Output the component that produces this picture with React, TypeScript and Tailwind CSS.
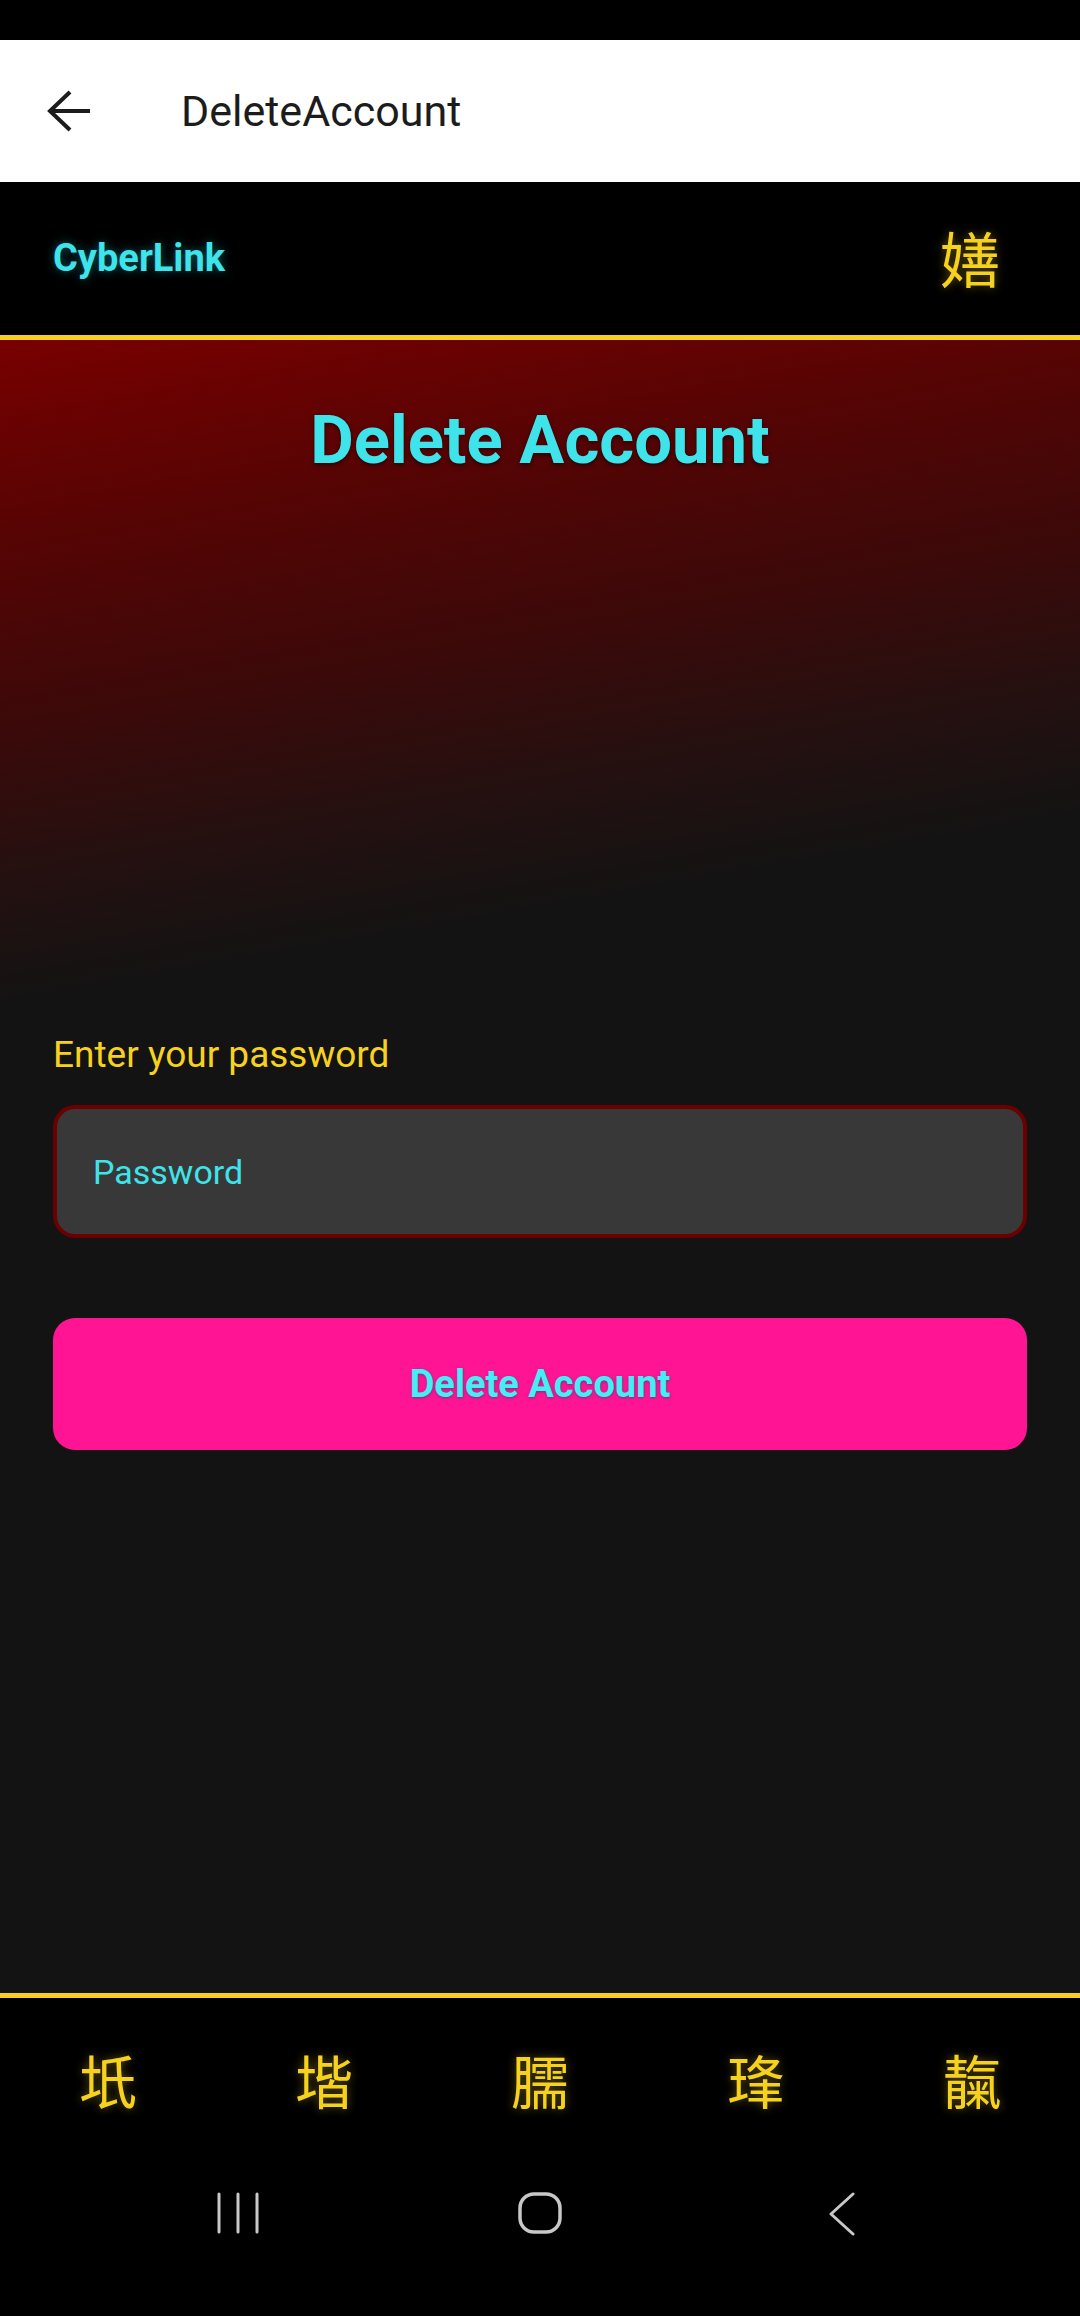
import React from 'react';

const navGlyphs = ['坁', '堦', '臑', '琒', '靝'];

export default function App() {
  return (
    <div className="w-[1080px] h-[2316px] flex flex-col bg-black overflow-hidden font-['Roboto','Noto_Sans_CJK_SC',sans-serif]">
      <div className="h-[40px] shrink-0 bg-black" />

      <header className="h-[142px] shrink-0 bg-white flex items-center relative z-10 shadow-[0_3px_8px_rgba(0,0,0,0.45)]">
        <svg className="ml-[46px]" width="46" height="44" viewBox="0 0 46 44" fill="none" stroke="#1c1c1c" strokeWidth="4">
          <path d="M44 22H4" />
          <path d="M24 3L4 22L24 41" />
        </svg>
        <h1 className="ml-[89px] text-[43px] leading-none text-[#1c1c1c]">DeleteAccount</h1>
      </header>

      <div className="h-[158px] shrink-0 flex items-center justify-between pl-[53px] pr-[80px] bg-black border-b-[5px] border-[#f6cf1f]">
        <span className="text-[38px] font-bold text-[#3fe3ea] [text-shadow:0_0_10px_rgba(0,200,210,0.45)]">CyberLink</span>
        <span className="text-[60px] leading-none mt-[8px] text-[#f6d21f] [text-shadow:0_0_10px_rgba(246,210,31,0.4)]">嫸</span>
      </div>

      <main className="flex-1 flex flex-col bg-[#131313] bg-[linear-gradient(170deg,#780000_0px,#560404_200px,#3c0909_380px,#261010_520px,#131313_660px)]">
        <section className="h-[660px] shrink-0 pt-[60px]">
          <h2 className="text-center text-[67px] leading-[80px] font-bold text-[#3fe3ea] [text-shadow:0_2px_4px_rgba(0,0,0,0.5)]">
            Delete Account
          </h2>
        </section>

        <section className="px-[53px] pt-[33px] flex flex-col">
          <label className="text-[37px] leading-[43px] text-[#f6d21f]">Enter your password</label>
          <input
            type="password"
            placeholder="Password"
            className="mt-[29px] h-[133px] rounded-[22px] border-[4px] border-[#6a0000] bg-[#383838] pl-[36px] text-[34px] text-[#3fe3ea] placeholder:text-[#3fe3ea] outline-none"
          />
          <button className="mt-[80px] h-[132px] rounded-[22px] bg-[#ff1493] text-[38px] font-bold text-[#45eef5] [text-shadow:0_1px_3px_rgba(0,80,120,0.6)]">
            Delete Account
          </button>
        </section>
      </main>

      <nav className="h-[177px] shrink-0 grid grid-cols-5 items-center bg-black border-t-[5px] border-[#f6cf1f]">
        {navGlyphs.map(c => (
          <span key={c} className="text-center text-[58px] leading-none text-[#f6d21f] [text-shadow:0_0_10px_rgba(246,210,31,0.4)]">
            {c}
          </span>
        ))}
      </nav>

      {/* system navigation bar */}
      <div className="h-[146px] shrink-0 bg-black flex justify-center pt-[22px]">
        <div className="w-[302px] flex justify-center">
          <svg width="44" height="42" viewBox="0 0 44 42" fill="none" stroke="#c8c8c8" strokeWidth="3" strokeLinecap="round">
            <path d="M3 2V40M22 2V40M41 2V40" />
          </svg>
        </div>
        <div className="w-[302px] flex justify-center">
          <svg width="44" height="42" viewBox="0 0 44 42" fill="none" stroke="#c8c8c8" strokeWidth="3.5">
            <rect x="2" y="2" width="40" height="38" rx="14" />
          </svg>
        </div>
        <div className="w-[302px] flex justify-center">
          <svg width="28" height="44" viewBox="0 0 28 44" fill="none" stroke="#c8c8c8" strokeWidth="3" strokeLinecap="round" strokeLinejoin="round">
            <path d="M25 2L3 22L25 42" />
          </svg>
        </div>
      </div>
    </div>
  );
}
